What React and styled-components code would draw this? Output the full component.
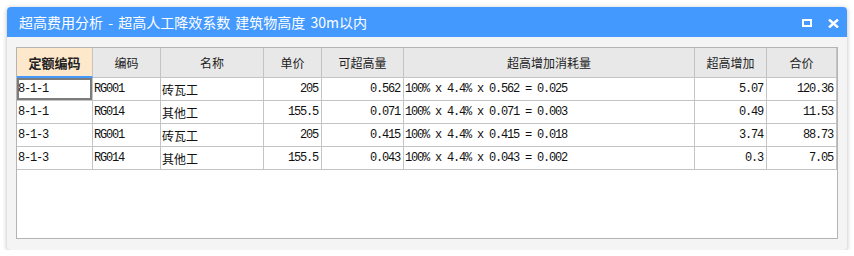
import React from "react";
import styled, { createGlobalStyle } from "styled-components";

const Global = createGlobalStyle`
  html, body { margin: 0; padding: 0; background: #ffffff; }
  body { font-family: "Noto Sans CJK SC", "Noto Sans", sans-serif; }
`;

const COLS = "76px 68px 103px 58px 82px 291px 72px 70px";

const Page = styled.div`
  padding: 7px 0 0 7px;
`;

const Win = styled.div`
  width: 840px;
  background: #f4f4f4;
  border-radius: 4px;
  box-shadow: 0 1px 5px rgba(0, 0, 0, 0.28);
  overflow: hidden;
`;

const TitleBar = styled.div`
  height: 30px;
  background: #4499ff;
  display: flex;
  align-items: center;
  padding: 0 8px 0 12px;
  color: #ffffff;
`;

const Title = styled.div`
  flex: 1;
  font-size: 14px;
  font-family: "Noto Sans CJK SC", "Noto Sans", sans-serif;
  word-spacing: 2px;
  white-space: nowrap;
`;

const Tools = styled.div`
  display: flex;
  align-items: center;
  gap: 16px;
  padding-top: 2px;
`;

const Body = styled.div`
  padding: 10px 9px 11px 9px;
`;

const Grid = styled.div`
  height: 190px;
  border: 1px solid #b4b4b4;
  background: #ffffff;
`;

const Row = styled.div`
  display: grid;
  grid-template-columns: ${COLS};
  height: ${(p) => (p.$head ? 30 : 23)}px;
`;

const HeadCell = styled.div`
  display: flex;
  align-items: center;
  justify-content: center;
  box-sizing: border-box;
  background: ${(p) => (p.$active ? "#fde8cc" : "#e8e8e8")};
  border-right: 1px solid #c4c4c4;
  border-bottom: ${(p) => (p.$active ? "2px solid #4499ff" : "1px solid #c4c4c4")};
  font-size: ${(p) => (p.$active ? 13 : 12)}px;
  font-weight: ${(p) => (p.$active ? 700 : 400)};
  color: #222222;
  padding-top: ${(p) => (p.$active ? 1 : 0)}px;
`;

const Cell = styled.div`
  display: flex;
  align-items: center;
  justify-content: ${(p) => (p.$right ? "flex-end" : "flex-start")};
  box-sizing: border-box;
  padding: 0 ${(p) => (p.$right ? 3 : 1)}px 0 ${(p) => (p.$right ? 0 : 1)}px;
  border-right: 1px solid #c4c4c4;
  border-bottom: 1px solid #c4c4c4;
  box-shadow: ${(p) => (p.$focus ? "inset 0 0 0 2px #7c7c7c" : "none")};
  font-family: ${(p) =>
    p.$cjk
      ? `"Noto Sans CJK SC", sans-serif`
      : `"Liberation Mono", "DejaVu Sans Mono", monospace`};
  font-size: 12px;
  letter-spacing: ${(p) => (p.$cjk ? "0" : "-1.2px")};
  color: #111111;
  white-space: nowrap;
  overflow: hidden;
`;

const heads = ["定额编码", "编码", "名称", "单价", "可超高量", "超高增加消耗量", "超高增加", "合价"];

const rows = [
  ["8-1-1", "RG001", "砖瓦工", "205", "0.562", "100% x 4.4% x 0.562 = 0.025", "5.07", "120.36"],
  ["8-1-1", "RG014", "其他工", "155.5", "0.071", "100% x 4.4% x 0.071 = 0.003", "0.49", "11.53"],
  ["8-1-3", "RG001", "砖瓦工", "205", "0.415", "100% x 4.4% x 0.415 = 0.018", "3.74", "88.73"],
  ["8-1-3", "RG014", "其他工", "155.5", "0.043", "100% x 4.4% x 0.043 = 0.002", "0.3", "7.05"],
];

const rightCols = [3, 4, 6, 7];

const MaxIcon = () => (
  <svg width="10" height="8" viewBox="0 0 10 8">
    <rect x="1" y="1" width="8" height="6" fill="none" stroke="#fff" strokeWidth="2" />
  </svg>
);

const CloseIcon = () => (
  <svg width="11" height="9" viewBox="0 0 11 9">
    <path d="M1 0.5 L10 8.5 M10 0.5 L1 8.5" stroke="#fff" strokeWidth="2.4" />
  </svg>
);

export default function App() {
  return (
    <>
      <Global />
      <Page>
        <Win>
          <TitleBar>
            <Title>超高费用分析 - 超高人工降效系数 建筑物高度 30m以内</Title>
            <Tools>
              <MaxIcon />
              <CloseIcon />
            </Tools>
          </TitleBar>
          <Body>
            <Grid>
              <Row $head>
                {heads.map((h, i) => (
                  <HeadCell key={h} $active={i === 0}>
                    {h}
                  </HeadCell>
                ))}
              </Row>
              {rows.map((r, ri) => (
                <Row key={ri}>
                  {r.map((v, ci) => (
                    <Cell
                      key={ci}
                      $right={rightCols.includes(ci)}
                      $cjk={ci === 2}
                      $focus={ri === 0 && ci === 0}
                    >
                      {v}
                    </Cell>
                  ))}
                </Row>
              ))}
            </Grid>
          </Body>
        </Win>
      </Page>
    </>
  );
}
